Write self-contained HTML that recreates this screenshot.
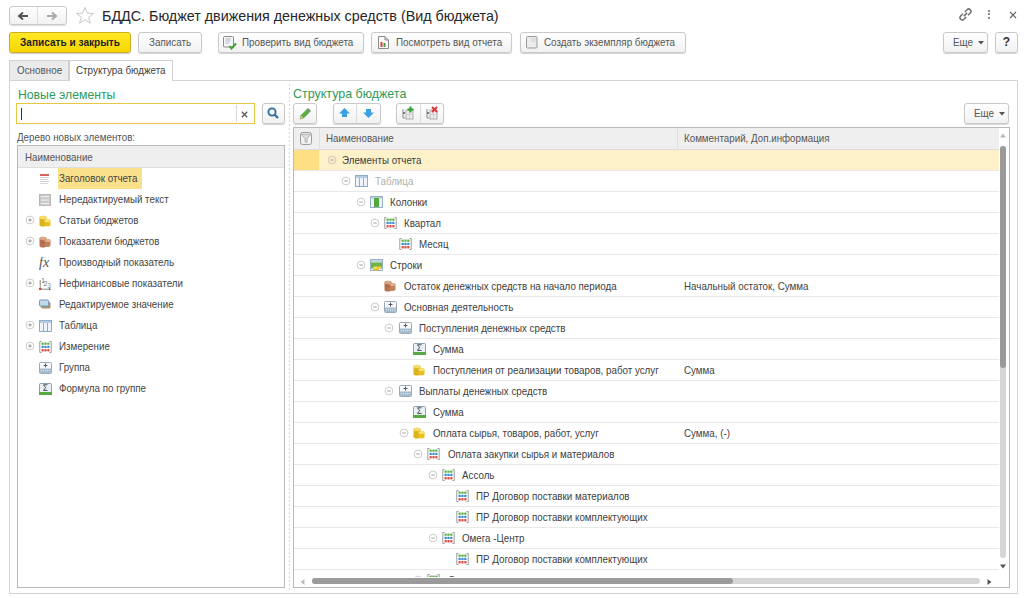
<!DOCTYPE html>
<html><head><meta charset="utf-8"><style>
*{box-sizing:border-box;margin:0;padding:0}
html,body{width:1024px;height:598px;overflow:hidden;background:#fff}
body{position:relative;font-family:"Liberation Sans",sans-serif;color:#404040}
.a{position:absolute}
.t{position:absolute;white-space:nowrap;font-size:11px;line-height:20px;color:#444;transform:scaleX(.889);transform-origin:0 0}
.btn{position:absolute;border:1px solid #c9c9c9;border-radius:3px;background:linear-gradient(#ffffff,#f1f1f1);box-shadow:0 1px 1px rgba(0,0,0,.18)}
.bt{position:absolute;white-space:nowrap;font-size:11px;line-height:20px;color:#555;transform:scaleX(.895);transform-origin:0 0}
.line{position:absolute;background:#e8e8e8;height:1px}
</style></head><body>

<div class="btn" style="left:9px;top:6px;width:58px;height:19px;box-shadow:0 1px 1px rgba(0,0,0,.15)"></div>
<div class="a" style="left:37px;top:7px;width:1px;height:17px;background:#dcdcdc"></div>
<svg class="a" style="left:17px;top:10.5px" width="12" height="10" viewBox="0 0 12 10"><path d="M11 5H3M6 1.5L2 5L6 8.5" stroke="#555" stroke-width="2" fill="none"/></svg>
<svg class="a" style="left:46px;top:10.5px" width="12" height="10" viewBox="0 0 12 10"><path d="M1 5H9M6 1.5L10 5L6 8.5" stroke="#a8a8a8" stroke-width="2" fill="none"/></svg>
<svg class="a" style="left:75px;top:6px" width="20" height="19" viewBox="0 0 20 19"><path d="M10 1.5L12.4 7.2L18.5 7.4L13.7 11.2L15.4 17.2L10 13.8L4.6 17.2L6.3 11.2L1.5 7.4L7.6 7.2Z" fill="none" stroke="#c8c8c8" stroke-width="1"/></svg>
<div class="a" style="left:102px;top:5.5px;font-size:14.3px;line-height:20px;color:#262626;white-space:nowrap">БДДС. Бюджет движения денежных средств (Вид бюджета)</div>
<svg class="a" style="left:958px;top:7px" width="15" height="15" viewBox="0 0 15 15"><g fill="none" stroke="#707070" stroke-width="1.45" transform="rotate(-45 7.5 7.5)"><path d="M6.2 5.2H3A2.3 2.3 0 0 0 3 9.8H6.2"/><path d="M8.8 5.2H12A2.3 2.3 0 0 1 12 9.8H8.8"/><path d="M5.2 7.5H9.8"/></g></svg>
<div class="a" style="left:987.8px;top:9.8px;width:2.3px;height:2.3px;border-radius:2px;background:#666"></div><div class="a" style="left:987.8px;top:12.9px;width:2.3px;height:2.3px;border-radius:2px;background:#666"></div><div class="a" style="left:987.8px;top:16.5px;width:2.3px;height:2.3px;border-radius:2px;background:#666"></div>
<svg class="a" style="left:1009px;top:11px" width="8" height="8" viewBox="0 0 8 8"><path d="M1 1L7 7M7 1L1 7" stroke="#666" stroke-width="1.1"/></svg>
<div class="a" style="left:9px;top:32px;width:122px;height:21px;border:1px solid #ccae20;border-radius:3px;background:linear-gradient(#ffe826,#f6d600);box-shadow:0 1px 1px rgba(0,0,0,.2)"></div>
<div class="a" style="left:20px;top:32px;font-size:11px;font-weight:bold;line-height:21px;color:#222;white-space:nowrap;transform:scaleX(.917);transform-origin:0 0">Записать и закрыть</div>
<div class="btn" style="left:138px;top:32px;width:64px;height:21px"></div>
<div class="bt" style="left:149px;top:32px;line-height:21px">Записать</div>
<div class="btn" style="left:218px;top:32px;width:146px;height:21px"></div>
<div class="bt" style="left:242px;top:32px;line-height:21px">Проверить вид бюджета</div>
<svg class="a" style="left:223px;top:36px" width="14" height="14" viewBox="0 0 14 14"><rect x="0.5" y="0.5" width="10" height="10.5" rx="1" fill="#f6f6f6" stroke="#8a8a8a"/><path d="M2.5 3H8M2.5 5H7.5M2.5 7H6" stroke="#a8b8c8"/><path d="M6.5 10L8.5 12.5L13 7.5" stroke="#40a030" stroke-width="2" fill="none"/></svg>
<div class="btn" style="left:371px;top:32px;width:141px;height:21px"></div>
<div class="bt" style="left:396px;top:32px;line-height:21px">Посмотреть вид отчета</div>
<svg class="a" style="left:378px;top:36px" width="11" height="13" viewBox="0 0 11 13"><path d="M0.5 0.5H7L10.5 4V12.5H0.5Z" fill="#fafafa" stroke="#8a8a8a"/><path d="M7 0.5V4H10.5" fill="#ccc" stroke="#8a8a8a"/><rect x="2.5" y="6" width="2" height="5" fill="#d84040"/><rect x="5.5" y="7" width="2" height="4" fill="#40a040"/></svg>
<div class="btn" style="left:520px;top:32px;width:166px;height:21px"></div>
<div class="bt" style="left:544px;top:32px;line-height:21px">Создать экземпляр бюджета</div>
<svg class="a" style="left:526px;top:36px" width="12" height="13" viewBox="0 0 12 13"><rect x="0.5" y="0.5" width="10.5" height="11.5" rx="1" fill="#ececec" stroke="#9a9a9a"/><rect x="5" y="2" width="4.5" height="4" fill="#dcdcdc"/></svg>
<div class="btn" style="left:943px;top:32px;width:45px;height:21px"></div>
<div class="bt" style="left:953px;top:32px;line-height:21px">Еще</div>
<svg class="a" style="left:978px;top:41px" width="6" height="4" viewBox="0 0 6 4"><path d="M0 0H6L3 3.5Z" fill="#555"/></svg>
<div class="btn" style="left:995px;top:32px;width:23px;height:21px"></div>
<div class="a" style="left:995px;top:32px;width:23px;line-height:21px;text-align:center;font-size:12px;font-weight:bold;color:#333">?</div>
<div class="a" style="left:9px;top:60px;width:60px;height:21px;background:#ebebeb;border:1px solid #d0d0d0;border-bottom:none"></div>
<div class="bt" style="left:17px;top:60px;line-height:21px">Основное</div>
<div class="a" style="left:9px;top:80px;width:1009px;height:514px;border:1px solid #d4d4d4;background:#fff"></div>
<div class="a" style="left:69px;top:60px;width:104px;height:21px;background:#fff;border:1px solid #d0d0d0;border-bottom:none"></div>
<div class="bt" style="left:76px;top:60px;line-height:21px;color:#404040">Структура бюджета</div>
<div class="a" style="left:18px;top:84.5px;font-size:13px;line-height:20px;color:#2f9a5a;white-space:nowrap;transform:scaleX(.94);transform-origin:0 0">Новые элементы</div>
<div class="a" style="left:16px;top:103px;width:239px;height:21px;border:1px solid #e8c840;background:#fff"></div>
<div class="a" style="left:21px;top:108px;width:1px;height:12px;background:#333"></div>
<div class="a" style="left:236px;top:105px;width:1px;height:17px;background:#d8d8d8"></div>
<svg class="a" style="left:241px;top:110.5px" width="7" height="7" viewBox="0 0 7 7"><path d="M0.8 0.8L6.2 6.2M6.2 0.8L0.8 6.2" stroke="#555" stroke-width="1.25"/></svg>
<div class="btn" style="left:262px;top:103px;width:23px;height:21px"></div>
<svg class="a" style="left:267px;top:107px" width="13" height="13" viewBox="0 0 13 13"><circle cx="5" cy="5" r="3.6" fill="none" stroke="#2a6aa0" stroke-width="1.8"/><path d="M7.5 7.5L11 11" stroke="#2a6aa0" stroke-width="2.2"/></svg>
<div class="t" style="left:17px;top:127px;color:#555">Дерево новых элементов:</div>
<div class="a" style="left:17px;top:145px;width:268px;height:443px;border:1px solid #b8b8b8;background:#fff"></div>
<div class="a" style="left:18px;top:146px;width:266px;height:22px;background:#efefef;border-bottom:1px solid #dedede"></div>
<div class="t" style="left:25px;top:146px;line-height:22px;color:#555">Наименование</div>
<div class="a" style="left:58px;top:168px;width:84px;height:21px;background:#fbe08c"></div>
<div class="a" style="left:39px;top:173px;width:13px;height:12px;line-height:0"><svg width="12" height="12" viewBox="0 0 12 12"><rect x="1" y="1" width="9" height="2" fill="#d8605a"/><rect x="1" y="4" width="9" height="1" fill="#cfd0d8"/><rect x="1" y="6" width="8" height="1" fill="#d4d4dc"/><rect x="1" y="8" width="9" height="1" fill="#cfd0d8"/><rect x="1" y="10" width="8" height="1" fill="#d8d8de"/></svg></div>
<div class="t" style="left:59px;top:168px;line-height:21px">Заголовок отчета</div>
<div class="a" style="left:39px;top:194px;width:13px;height:12px;line-height:0"><svg width="12" height="12" viewBox="0 0 12 12"><rect x="0" y="0" width="12" height="12" fill="#c9c9c9"/><rect x="0.5" y="0.5" width="11" height="11" fill="none" stroke="#b8b8b8"/><rect x="2" y="2" width="8" height="1.2" fill="#ededed"/><rect x="2" y="5.5" width="8" height="1.2" fill="#ededed"/><rect x="2" y="9" width="8" height="1.2" fill="#ededed"/></svg></div>
<div class="t" style="left:59px;top:189px;line-height:21px">Нередактируемый текст</div>
<svg class="a" style="left:25px;top:215px" width="10" height="10" viewBox="0 0 10 10"><circle cx="5" cy="5" r="3.9" fill="#fff" stroke="#c4c4c4" stroke-width="0.9"/><path d="M3.3 5H6.7M5 3.3V6.7" stroke="#8a8a8a" stroke-width="0.9"/></svg>
<div class="a" style="left:39px;top:215px;width:13px;height:12px;line-height:0"><svg width="12" height="12" viewBox="0 0 12 12"><path d="M0.5 2.5A3.5 1.8 0 0 1 7.5 2.5V9.8A3.5 1.8 0 0 1 0.5 9.8Z" fill="#dcb21c"/><ellipse cx="4" cy="2.5" rx="3.5" ry="1.8" fill="#f4dc66"/><path d="M5.5 5.5A3 1.6 0 0 1 11.5 5.5V9.8A3 1.6 0 0 1 5.5 9.8Z" fill="#e8c020"/><ellipse cx="8.5" cy="5.5" rx="3" ry="1.6" fill="#f8e27a"/></svg></div>
<div class="t" style="left:59px;top:210px;line-height:21px">Статьи бюджетов</div>
<svg class="a" style="left:25px;top:236px" width="10" height="10" viewBox="0 0 10 10"><circle cx="5" cy="5" r="3.9" fill="#fff" stroke="#c4c4c4" stroke-width="0.9"/><path d="M3.3 5H6.7M5 3.3V6.7" stroke="#8a8a8a" stroke-width="0.9"/></svg>
<div class="a" style="left:39px;top:236px;width:13px;height:12px;line-height:0"><svg width="12" height="12" viewBox="0 0 12 12"><path d="M0.5 2.5A3.5 1.8 0 0 1 7.5 2.5V9.8A3.5 1.8 0 0 1 0.5 9.8Z" fill="#b8724c"/><ellipse cx="4" cy="2.5" rx="3.5" ry="1.8" fill="#dca684"/><path d="M5.5 4.5A3 1.6 0 0 1 11.5 4.5V9.3A3 1.6 0 0 1 5.5 9.3Z" fill="#c08060"/><ellipse cx="8.5" cy="4.5" rx="3" ry="1.6" fill="#e2b090"/><path d="M1 5H7M1 7H7" stroke="#9a5a3a" stroke-width="0.5" opacity=".6"/></svg></div>
<div class="t" style="left:59px;top:231px;line-height:21px">Показатели бюджетов</div>
<div class="a" style="left:39px;top:257px;width:13px;height:12px;line-height:0"><svg width="14" height="13" viewBox="0 0 14 13"><text x="0" y="10" font-family="Liberation Serif" font-style="italic" font-size="14" fill="#555">fx</text></svg></div>
<div class="t" style="left:59px;top:252px;line-height:21px">Производный показатель</div>
<svg class="a" style="left:25px;top:278px" width="10" height="10" viewBox="0 0 10 10"><circle cx="5" cy="5" r="3.9" fill="#fff" stroke="#c4c4c4" stroke-width="0.9"/><path d="M3.3 5H6.7M5 3.3V6.7" stroke="#8a8a8a" stroke-width="0.9"/></svg>
<div class="a" style="left:39px;top:278px;width:13px;height:12px;line-height:0"><svg width="13" height="12" viewBox="0 0 13 12"><path d="M1.2 2V11.2H10.5" stroke="#8a8a8a" fill="none" stroke-width="1"/><rect x="0" y="10" width="2.6" height="2" fill="#d04a40"/><path d="M10 9.8L12 11.2L10 12.6Z" fill="#555"/><text x="2.2" y="5.2" font-family="Liberation Sans" font-size="6.5" fill="#5a6a7a">1</text><text x="4.6" y="8.4" font-family="Liberation Sans" font-size="7" fill="#6a7a8a">2</text><text x="8.3" y="10" font-family="Liberation Sans" font-size="6.5" fill="#7a8a9a">3</text></svg></div>
<div class="t" style="left:59px;top:273px;line-height:21px">Нефинансовые показатели</div>
<div class="a" style="left:39px;top:299px;width:13px;height:12px;line-height:0"><svg width="12" height="12" viewBox="0 0 12 12"><rect x="2.5" y="3.5" width="9" height="6" rx="1" fill="#d87a68"/><rect x="1.5" y="2.5" width="9" height="6" rx="1" fill="#78b060"/><rect x="0.5" y="1" width="9" height="6" rx="1" fill="#c0d8ec" stroke="#7898b8"/></svg></div>
<div class="t" style="left:59px;top:294px;line-height:21px">Редактируемое значение</div>
<svg class="a" style="left:25px;top:320px" width="10" height="10" viewBox="0 0 10 10"><circle cx="5" cy="5" r="3.9" fill="#fff" stroke="#c4c4c4" stroke-width="0.9"/><path d="M3.3 5H6.7M5 3.3V6.7" stroke="#8a8a8a" stroke-width="0.9"/></svg>
<div class="a" style="left:39px;top:320px;width:13px;height:12px;line-height:0"><svg width="13" height="12" viewBox="0 0 13 12"><rect x="0.5" y="0.5" width="12" height="11" fill="#eef4fa" stroke="#8eacc8"/><rect x="1" y="1" width="11" height="2" fill="#b4cce0"/><path d="M4.5 3V11.5M8.5 3V11.5" stroke="#8eacc8"/></svg></div>
<div class="t" style="left:59px;top:315px;line-height:21px">Таблица</div>
<svg class="a" style="left:25px;top:341px" width="10" height="10" viewBox="0 0 10 10"><circle cx="5" cy="5" r="3.9" fill="#fff" stroke="#c4c4c4" stroke-width="0.9"/><path d="M3.3 5H6.7M5 3.3V6.7" stroke="#8a8a8a" stroke-width="0.9"/></svg>
<div class="a" style="left:39px;top:341px;width:13px;height:12px;line-height:0"><svg width="13" height="12" viewBox="0 0 13 12"><path d="M2.5 0.5H0.8V11.5H2.5M10.5 0.5H12.2V11.5H10.5" stroke="#9a9a9a" stroke-width="1" fill="none"/><g fill="#5cb048"><rect x="2.5" y="1.5" width="2.3" height="2.3" rx=".6"/><rect x="5.35" y="1.5" width="2.3" height="2.3" rx=".6"/><rect x="8.2" y="1.5" width="2.3" height="2.3" rx=".6"/></g><g fill="#3a8ed0"><rect x="2.5" y="4.8" width="2.3" height="2.3" rx=".6"/><rect x="5.35" y="4.8" width="2.3" height="2.3" rx=".6"/><rect x="8.2" y="4.8" width="2.3" height="2.3" rx=".6"/></g><g fill="#d8504a"><rect x="2.5" y="8.1" width="2.3" height="2.3" rx=".6"/><rect x="5.35" y="8.1" width="2.3" height="2.3" rx=".6"/><rect x="8.2" y="8.1" width="2.3" height="2.3" rx=".6"/></g></svg></div>
<div class="t" style="left:59px;top:336px;line-height:21px">Измерение</div>
<div class="a" style="left:39px;top:362px;width:13px;height:12px;line-height:0"><svg width="13" height="12" viewBox="0 0 13 12"><rect x="0.5" y="0.5" width="12" height="11" rx="1" fill="#f6f8fa" stroke="#98aaba"/><rect x="1" y="6.5" width="11" height="4.5" fill="#a6bccd"/><path d="M2 8.8H11" stroke="#dfe8ef" stroke-dasharray="1 1"/><path d="M6.5 1.5V5.5M4.5 3.5H8.5" stroke="#505a64" stroke-width="1"/></svg></div>
<div class="t" style="left:59px;top:357px;line-height:21px">Группа</div>
<div class="a" style="left:39px;top:383px;width:13px;height:12px;line-height:0"><svg width="13" height="12" viewBox="0 0 13 12"><rect x="0.5" y="0.5" width="12" height="11" rx="1" fill="#e8f0f5" stroke="#8aa2b2"/><rect x="0" y="9" width="13" height="3" fill="#58aa40"/><path d="M4.5 1.8H8.5M4.5 1.8L6.6 4.6L4.5 7.4H8.5" stroke="#3a3a3a" fill="none" stroke-width="0.9"/></svg></div>
<div class="t" style="left:59px;top:378px;line-height:21px">Формула по группе</div>
<div class="a" style="left:289px;top:84px;width:1px;height:506px;background:repeating-linear-gradient(#d8d8d8 0 2px,transparent 2px 4px)"></div>
<div class="a" style="left:293px;top:84px;font-size:13px;line-height:20px;color:#2f9a5a;white-space:nowrap;transform:scaleX(.958);transform-origin:0 0">Структура бюджета</div>
<div class="btn" style="left:293px;top:103px;width:24px;height:21px"></div>
<svg class="a" style="left:298px;top:107px" width="14" height="14" viewBox="0 0 14 14"><path d="M2 12L3 8.5L10 1.5L12.5 4L5.5 11Z" fill="#58b040" stroke="#3a7a2a" stroke-width="0.6"/><path d="M2 12L3 8.5L5.5 11Z" fill="#e8c890"/><path d="M10 1.5L12.5 4L11.5 5L9 2.5Z" fill="#888"/></svg>
<div class="btn" style="left:333px;top:103px;width:48px;height:21px"></div>
<div class="a" style="left:356px;top:104px;width:1px;height:19px;background:#dcdcdc"></div>
<svg class="a" style="left:338px;top:107px" width="13" height="12" viewBox="0 0 13 12"><path d="M6.5 1L12 6.5H9V10H4V6.5H1Z" fill="#3aa0e0"/></svg>
<svg class="a" style="left:362px;top:107px" width="13" height="12" viewBox="0 0 13 12"><path d="M6.5 11L12 5.5H9V2H4V5.5H1Z" fill="#3aa0e0"/></svg>
<div class="btn" style="left:396px;top:103px;width:48px;height:21px"></div>
<div class="a" style="left:420px;top:104px;width:1px;height:19px;background:#dcdcdc"></div>
<svg class="a" style="left:401px;top:106px" width="14" height="14" viewBox="0 0 14 14"><rect x="5" y="4" width="7" height="9" fill="#eee" stroke="#aaa"/><path d="M8.5 4V13M5 8.5H12" stroke="#ccc"/><path d="M2 3V12M2 12H4" stroke="#888"/><circle cx="3" cy="7" r="1" fill="#555"/><path d="M9.5 0.5V6.5M6.5 3.5H12.5" stroke="#30a030" stroke-width="2"/></svg>
<svg class="a" style="left:425px;top:106px" width="14" height="14" viewBox="0 0 14 14"><rect x="5" y="4" width="7" height="9" fill="#eee" stroke="#aaa"/><path d="M8.5 4V13M5 8.5H12" stroke="#ccc"/><path d="M2 3V12M2 12H4" stroke="#888"/><circle cx="3" cy="7" r="1" fill="#555"/><path d="M7 1L12 6M12 1L7 6" stroke="#e03030" stroke-width="1.8"/></svg>
<div class="a" style="left:964px;top:103px;width:45px;height:21px;border:1px solid #c9c9c9;border-radius:3px;background:linear-gradient(#fff,#f1f1f1);box-shadow:0 1px 1px rgba(0,0,0,.18)"></div>
<div class="bt" style="left:974px;top:103px;line-height:21px">Еще</div>
<svg class="a" style="left:999px;top:112px" width="6" height="4" viewBox="0 0 6 4"><path d="M0 0H6L3 3.5Z" fill="#555"/></svg>
<div class="a" style="left:293px;top:127px;width:717px;height:461px;border:1px solid #b8b8b8;background:#fff"></div>
<div class="a" style="left:294px;top:128px;width:705px;height:22px;background:#efefef;border-bottom:1px solid #dcdcdc"></div>
<div class="a" style="left:319px;top:128px;width:1px;height:21px;background:#dedede"></div>
<div class="a" style="left:677px;top:128px;width:1px;height:21px;background:#dedede"></div>
<svg class="a" style="left:300px;top:132px" width="12" height="13" viewBox="0 0 12 13"><rect x="0.5" y="0.5" width="11" height="12" rx="2" fill="#f2f2f2" stroke="#9c9c9c"/><path d="M1.2 2.2H10.8L7 6.5V10.8L5 9.8V6.5Z" fill="#dcdcdc" stroke="#a4a4a4" stroke-width="0.8"/></svg>
<div class="t" style="left:326px;top:128px;line-height:21px;color:#555">Наименование</div>
<div class="t" style="left:684px;top:128px;line-height:21px;color:#555">Комментарий, Доп.информация</div>
<div class="a" style="left:294px;top:150px;width:705px;height:437px;overflow:hidden">
<div class="a" style="left:0px;top:0px;width:25px;height:20px;background:#fde084"></div>
<div class="a" style="left:25px;top:0px;width:680px;height:20px;background:#fcf1c8"></div>
<div class="line" style="left:0;top:20px;width:705px"></div>
<svg class="a" style="left:33px;top:5px" width="10" height="10" viewBox="0 0 10 10"><circle cx="5" cy="5" r="3.9" fill="none" stroke="#c4c4c4" stroke-width="0.9"/><path d="M3.2 5H6.8" stroke="#9a9a9a" stroke-width="0.9"/></svg>
<div class="t" style="left:47.8px;top:0px;color:#404040">Элементы отчета</div>
<div class="line" style="left:0;top:41px;width:705px"></div>
<svg class="a" style="left:47px;top:26px" width="10" height="10" viewBox="0 0 10 10"><circle cx="5" cy="5" r="3.9" fill="none" stroke="#c4c4c4" stroke-width="0.9"/><path d="M3.2 5H6.8" stroke="#9a9a9a" stroke-width="0.9"/></svg>
<div class="a" style="left:61px;top:25px;width:13px;height:12px;line-height:0"><svg width="13" height="12" viewBox="0 0 13 12"><rect x="0.5" y="0.5" width="12" height="11" fill="#eef4fa" stroke="#8eacc8"/><rect x="1" y="1" width="11" height="2" fill="#b4cce0"/><path d="M4.5 3V11.5M8.5 3V11.5" stroke="#8eacc8"/></svg></div>
<div class="t" style="left:81.3px;top:21px;color:#b0b0b0">Таблица</div>
<div class="line" style="left:0;top:62px;width:705px"></div>
<svg class="a" style="left:62px;top:47px" width="10" height="10" viewBox="0 0 10 10"><circle cx="5" cy="5" r="3.9" fill="none" stroke="#c4c4c4" stroke-width="0.9"/><path d="M3.2 5H6.8" stroke="#9a9a9a" stroke-width="0.9"/></svg>
<div class="a" style="left:76px;top:46px;width:13px;height:12px;line-height:0"><svg width="13" height="12" viewBox="0 0 13 12"><rect x="0.5" y="0.5" width="12" height="11" fill="#eef4f8" stroke="#98b0c4"/><rect x="1" y="1" width="11" height="1.5" fill="#b8c8d4"/><rect x="4" y="2" width="5" height="9" fill="#52aa3c"/></svg></div>
<div class="t" style="left:95.7px;top:42px;color:#404040">Колонки</div>
<div class="line" style="left:0;top:83px;width:705px"></div>
<svg class="a" style="left:76px;top:68px" width="10" height="10" viewBox="0 0 10 10"><circle cx="5" cy="5" r="3.9" fill="none" stroke="#c4c4c4" stroke-width="0.9"/><path d="M3.2 5H6.8" stroke="#9a9a9a" stroke-width="0.9"/></svg>
<div class="a" style="left:90px;top:67px;width:13px;height:12px;line-height:0"><svg width="13" height="12" viewBox="0 0 13 12"><path d="M2.5 0.5H0.8V11.5H2.5M10.5 0.5H12.2V11.5H10.5" stroke="#9a9a9a" stroke-width="1" fill="none"/><g fill="#5cb048"><rect x="2.5" y="1.5" width="2.3" height="2.3" rx=".6"/><rect x="5.35" y="1.5" width="2.3" height="2.3" rx=".6"/><rect x="8.2" y="1.5" width="2.3" height="2.3" rx=".6"/></g><g fill="#3a8ed0"><rect x="2.5" y="4.8" width="2.3" height="2.3" rx=".6"/><rect x="5.35" y="4.8" width="2.3" height="2.3" rx=".6"/><rect x="8.2" y="4.8" width="2.3" height="2.3" rx=".6"/></g><g fill="#d8504a"><rect x="2.5" y="8.1" width="2.3" height="2.3" rx=".6"/><rect x="5.35" y="8.1" width="2.3" height="2.3" rx=".6"/><rect x="8.2" y="8.1" width="2.3" height="2.3" rx=".6"/></g></svg></div>
<div class="t" style="left:110.2px;top:63px;color:#404040">Квартал</div>
<div class="line" style="left:0;top:104px;width:705px"></div>
<div class="a" style="left:105px;top:88px;width:13px;height:12px;line-height:0"><svg width="13" height="12" viewBox="0 0 13 12"><path d="M2.5 0.5H0.8V11.5H2.5M10.5 0.5H12.2V11.5H10.5" stroke="#9a9a9a" stroke-width="1" fill="none"/><g fill="#5cb048"><rect x="2.5" y="1.5" width="2.3" height="2.3" rx=".6"/><rect x="5.35" y="1.5" width="2.3" height="2.3" rx=".6"/><rect x="8.2" y="1.5" width="2.3" height="2.3" rx=".6"/></g><g fill="#3a8ed0"><rect x="2.5" y="4.8" width="2.3" height="2.3" rx=".6"/><rect x="5.35" y="4.8" width="2.3" height="2.3" rx=".6"/><rect x="8.2" y="4.8" width="2.3" height="2.3" rx=".6"/></g><g fill="#d8504a"><rect x="2.5" y="8.1" width="2.3" height="2.3" rx=".6"/><rect x="5.35" y="8.1" width="2.3" height="2.3" rx=".6"/><rect x="8.2" y="8.1" width="2.3" height="2.3" rx=".6"/></g></svg></div>
<div class="t" style="left:124.6px;top:84px;color:#404040">Месяц</div>
<div class="line" style="left:0;top:125px;width:705px"></div>
<svg class="a" style="left:62px;top:110px" width="10" height="10" viewBox="0 0 10 10"><circle cx="5" cy="5" r="3.9" fill="none" stroke="#c4c4c4" stroke-width="0.9"/><path d="M3.2 5H6.8" stroke="#9a9a9a" stroke-width="0.9"/></svg>
<div class="a" style="left:76px;top:109px;width:13px;height:12px;line-height:0"><svg width="13" height="12" viewBox="0 0 13 12"><rect x="0.5" y="0.5" width="12" height="11" fill="#eef4f8" stroke="#98b0c4"/><rect x="1" y="1" width="11" height="2.5" fill="#c4d4e0"/><rect x="1" y="3.5" width="11" height="6" fill="#6cb448"/><ellipse cx="6" cy="9.5" rx="3" ry="2" fill="#e2b820"/><ellipse cx="5.5" cy="8.8" rx="2.4" ry="1.4" fill="#f6dc5a"/><ellipse cx="9.5" cy="8.5" rx="2" ry="1.3" fill="#f0d040"/></svg></div>
<div class="t" style="left:95.7px;top:105px;color:#404040">Строки</div>
<div class="line" style="left:0;top:146px;width:705px"></div>
<div class="a" style="left:90px;top:130px;width:13px;height:12px;line-height:0"><svg width="12" height="12" viewBox="0 0 12 12"><path d="M0.5 2.5A3.5 1.8 0 0 1 7.5 2.5V9.8A3.5 1.8 0 0 1 0.5 9.8Z" fill="#b8724c"/><ellipse cx="4" cy="2.5" rx="3.5" ry="1.8" fill="#dca684"/><path d="M5.5 4.5A3 1.6 0 0 1 11.5 4.5V9.3A3 1.6 0 0 1 5.5 9.3Z" fill="#c08060"/><ellipse cx="8.5" cy="4.5" rx="3" ry="1.6" fill="#e2b090"/><path d="M1 5H7M1 7H7" stroke="#9a5a3a" stroke-width="0.5" opacity=".6"/></svg></div>
<div class="t" style="left:110.2px;top:126px;color:#404040">Остаток денежных средств на начало периода</div>
<div class="t" style="left:390px;top:126px">Начальный остаток, Сумма</div>
<div class="line" style="left:0;top:167px;width:705px"></div>
<svg class="a" style="left:76px;top:152px" width="10" height="10" viewBox="0 0 10 10"><circle cx="5" cy="5" r="3.9" fill="none" stroke="#c4c4c4" stroke-width="0.9"/><path d="M3.2 5H6.8" stroke="#9a9a9a" stroke-width="0.9"/></svg>
<div class="a" style="left:90px;top:151px;width:13px;height:12px;line-height:0"><svg width="13" height="12" viewBox="0 0 13 12"><rect x="0.5" y="0.5" width="12" height="11" rx="1" fill="#f6f8fa" stroke="#98aaba"/><rect x="1" y="6.5" width="11" height="4.5" fill="#a6bccd"/><path d="M2 8.8H11" stroke="#dfe8ef" stroke-dasharray="1 1"/><path d="M6.5 1.5V5.5M4.5 3.5H8.5" stroke="#505a64" stroke-width="1"/></svg></div>
<div class="t" style="left:110.2px;top:147px;color:#404040">Основная деятельность</div>
<div class="line" style="left:0;top:188px;width:705px"></div>
<svg class="a" style="left:90px;top:173px" width="10" height="10" viewBox="0 0 10 10"><circle cx="5" cy="5" r="3.9" fill="none" stroke="#c4c4c4" stroke-width="0.9"/><path d="M3.2 5H6.8" stroke="#9a9a9a" stroke-width="0.9"/></svg>
<div class="a" style="left:105px;top:172px;width:13px;height:12px;line-height:0"><svg width="13" height="12" viewBox="0 0 13 12"><rect x="0.5" y="0.5" width="12" height="11" rx="1" fill="#f6f8fa" stroke="#98aaba"/><rect x="1" y="6.5" width="11" height="4.5" fill="#a6bccd"/><path d="M2 8.8H11" stroke="#dfe8ef" stroke-dasharray="1 1"/><path d="M6.5 1.5V5.5M4.5 3.5H8.5" stroke="#505a64" stroke-width="1"/></svg></div>
<div class="t" style="left:124.6px;top:168px;color:#404040">Поступления денежных средств</div>
<div class="line" style="left:0;top:209px;width:705px"></div>
<div class="a" style="left:119px;top:193px;width:13px;height:12px;line-height:0"><svg width="13" height="12" viewBox="0 0 13 12"><rect x="0.5" y="0.5" width="12" height="11" rx="1" fill="#e8f0f5" stroke="#8aa2b2"/><rect x="0" y="9" width="13" height="3" fill="#58aa40"/><path d="M4.5 1.8H8.5M4.5 1.8L6.6 4.6L4.5 7.4H8.5" stroke="#3a3a3a" fill="none" stroke-width="0.9"/></svg></div>
<div class="t" style="left:139.0px;top:189px;color:#404040">Сумма</div>
<div class="line" style="left:0;top:230px;width:705px"></div>
<div class="a" style="left:119px;top:214px;width:13px;height:12px;line-height:0"><svg width="12" height="12" viewBox="0 0 12 12"><path d="M0.5 2.5A3.5 1.8 0 0 1 7.5 2.5V9.8A3.5 1.8 0 0 1 0.5 9.8Z" fill="#dcb21c"/><ellipse cx="4" cy="2.5" rx="3.5" ry="1.8" fill="#f4dc66"/><path d="M5.5 5.5A3 1.6 0 0 1 11.5 5.5V9.8A3 1.6 0 0 1 5.5 9.8Z" fill="#e8c020"/><ellipse cx="8.5" cy="5.5" rx="3" ry="1.6" fill="#f8e27a"/></svg></div>
<div class="t" style="left:139.0px;top:210px;color:#404040">Поступления от реализации товаров, работ услуг</div>
<div class="t" style="left:390px;top:210px">Сумма</div>
<div class="line" style="left:0;top:251px;width:705px"></div>
<svg class="a" style="left:90px;top:236px" width="10" height="10" viewBox="0 0 10 10"><circle cx="5" cy="5" r="3.9" fill="none" stroke="#c4c4c4" stroke-width="0.9"/><path d="M3.2 5H6.8" stroke="#9a9a9a" stroke-width="0.9"/></svg>
<div class="a" style="left:105px;top:235px;width:13px;height:12px;line-height:0"><svg width="13" height="12" viewBox="0 0 13 12"><rect x="0.5" y="0.5" width="12" height="11" rx="1" fill="#f6f8fa" stroke="#98aaba"/><rect x="1" y="6.5" width="11" height="4.5" fill="#a6bccd"/><path d="M2 8.8H11" stroke="#dfe8ef" stroke-dasharray="1 1"/><path d="M6.5 1.5V5.5M4.5 3.5H8.5" stroke="#505a64" stroke-width="1"/></svg></div>
<div class="t" style="left:124.6px;top:231px;color:#404040">Выплаты денежных средств</div>
<div class="line" style="left:0;top:272px;width:705px"></div>
<div class="a" style="left:119px;top:256px;width:13px;height:12px;line-height:0"><svg width="13" height="12" viewBox="0 0 13 12"><rect x="0.5" y="0.5" width="12" height="11" rx="1" fill="#e8f0f5" stroke="#8aa2b2"/><rect x="0" y="9" width="13" height="3" fill="#58aa40"/><path d="M4.5 1.8H8.5M4.5 1.8L6.6 4.6L4.5 7.4H8.5" stroke="#3a3a3a" fill="none" stroke-width="0.9"/></svg></div>
<div class="t" style="left:139.0px;top:252px;color:#404040">Сумма</div>
<div class="line" style="left:0;top:293px;width:705px"></div>
<svg class="a" style="left:105px;top:278px" width="10" height="10" viewBox="0 0 10 10"><circle cx="5" cy="5" r="3.9" fill="none" stroke="#c4c4c4" stroke-width="0.9"/><path d="M3.2 5H6.8" stroke="#9a9a9a" stroke-width="0.9"/></svg>
<div class="a" style="left:119px;top:277px;width:13px;height:12px;line-height:0"><svg width="12" height="12" viewBox="0 0 12 12"><path d="M0.5 2.5A3.5 1.8 0 0 1 7.5 2.5V9.8A3.5 1.8 0 0 1 0.5 9.8Z" fill="#dcb21c"/><ellipse cx="4" cy="2.5" rx="3.5" ry="1.8" fill="#f4dc66"/><path d="M5.5 5.5A3 1.6 0 0 1 11.5 5.5V9.8A3 1.6 0 0 1 5.5 9.8Z" fill="#e8c020"/><ellipse cx="8.5" cy="5.5" rx="3" ry="1.6" fill="#f8e27a"/></svg></div>
<div class="t" style="left:139.0px;top:273px;color:#404040">Оплата сырья, товаров, работ, услуг</div>
<div class="t" style="left:390px;top:273px">Сумма, (-)</div>
<div class="line" style="left:0;top:314px;width:705px"></div>
<svg class="a" style="left:119px;top:299px" width="10" height="10" viewBox="0 0 10 10"><circle cx="5" cy="5" r="3.9" fill="none" stroke="#c4c4c4" stroke-width="0.9"/><path d="M3.2 5H6.8" stroke="#9a9a9a" stroke-width="0.9"/></svg>
<div class="a" style="left:133px;top:298px;width:13px;height:12px;line-height:0"><svg width="13" height="12" viewBox="0 0 13 12"><path d="M2.5 0.5H0.8V11.5H2.5M10.5 0.5H12.2V11.5H10.5" stroke="#9a9a9a" stroke-width="1" fill="none"/><g fill="#5cb048"><rect x="2.5" y="1.5" width="2.3" height="2.3" rx=".6"/><rect x="5.35" y="1.5" width="2.3" height="2.3" rx=".6"/><rect x="8.2" y="1.5" width="2.3" height="2.3" rx=".6"/></g><g fill="#3a8ed0"><rect x="2.5" y="4.8" width="2.3" height="2.3" rx=".6"/><rect x="5.35" y="4.8" width="2.3" height="2.3" rx=".6"/><rect x="8.2" y="4.8" width="2.3" height="2.3" rx=".6"/></g><g fill="#d8504a"><rect x="2.5" y="8.1" width="2.3" height="2.3" rx=".6"/><rect x="5.35" y="8.1" width="2.3" height="2.3" rx=".6"/><rect x="8.2" y="8.1" width="2.3" height="2.3" rx=".6"/></g></svg></div>
<div class="t" style="left:153.5px;top:294px;color:#404040">Оплата закупки сырья и материалов</div>
<div class="line" style="left:0;top:335px;width:705px"></div>
<svg class="a" style="left:134px;top:320px" width="10" height="10" viewBox="0 0 10 10"><circle cx="5" cy="5" r="3.9" fill="none" stroke="#c4c4c4" stroke-width="0.9"/><path d="M3.2 5H6.8" stroke="#9a9a9a" stroke-width="0.9"/></svg>
<div class="a" style="left:148px;top:319px;width:13px;height:12px;line-height:0"><svg width="13" height="12" viewBox="0 0 13 12"><path d="M2.5 0.5H0.8V11.5H2.5M10.5 0.5H12.2V11.5H10.5" stroke="#9a9a9a" stroke-width="1" fill="none"/><g fill="#5cb048"><rect x="2.5" y="1.5" width="2.3" height="2.3" rx=".6"/><rect x="5.35" y="1.5" width="2.3" height="2.3" rx=".6"/><rect x="8.2" y="1.5" width="2.3" height="2.3" rx=".6"/></g><g fill="#3a8ed0"><rect x="2.5" y="4.8" width="2.3" height="2.3" rx=".6"/><rect x="5.35" y="4.8" width="2.3" height="2.3" rx=".6"/><rect x="8.2" y="4.8" width="2.3" height="2.3" rx=".6"/></g><g fill="#d8504a"><rect x="2.5" y="8.1" width="2.3" height="2.3" rx=".6"/><rect x="5.35" y="8.1" width="2.3" height="2.3" rx=".6"/><rect x="8.2" y="8.1" width="2.3" height="2.3" rx=".6"/></g></svg></div>
<div class="t" style="left:167.9px;top:315px;color:#404040">Ассоль</div>
<div class="line" style="left:0;top:356px;width:705px"></div>
<div class="a" style="left:162px;top:340px;width:13px;height:12px;line-height:0"><svg width="13" height="12" viewBox="0 0 13 12"><path d="M2.5 0.5H0.8V11.5H2.5M10.5 0.5H12.2V11.5H10.5" stroke="#9a9a9a" stroke-width="1" fill="none"/><g fill="#5cb048"><rect x="2.5" y="1.5" width="2.3" height="2.3" rx=".6"/><rect x="5.35" y="1.5" width="2.3" height="2.3" rx=".6"/><rect x="8.2" y="1.5" width="2.3" height="2.3" rx=".6"/></g><g fill="#3a8ed0"><rect x="2.5" y="4.8" width="2.3" height="2.3" rx=".6"/><rect x="5.35" y="4.8" width="2.3" height="2.3" rx=".6"/><rect x="8.2" y="4.8" width="2.3" height="2.3" rx=".6"/></g><g fill="#d8504a"><rect x="2.5" y="8.1" width="2.3" height="2.3" rx=".6"/><rect x="5.35" y="8.1" width="2.3" height="2.3" rx=".6"/><rect x="8.2" y="8.1" width="2.3" height="2.3" rx=".6"/></g></svg></div>
<div class="t" style="left:182.3px;top:336px;color:#404040">ПР Договор поставки материалов</div>
<div class="line" style="left:0;top:377px;width:705px"></div>
<div class="a" style="left:162px;top:361px;width:13px;height:12px;line-height:0"><svg width="13" height="12" viewBox="0 0 13 12"><path d="M2.5 0.5H0.8V11.5H2.5M10.5 0.5H12.2V11.5H10.5" stroke="#9a9a9a" stroke-width="1" fill="none"/><g fill="#5cb048"><rect x="2.5" y="1.5" width="2.3" height="2.3" rx=".6"/><rect x="5.35" y="1.5" width="2.3" height="2.3" rx=".6"/><rect x="8.2" y="1.5" width="2.3" height="2.3" rx=".6"/></g><g fill="#3a8ed0"><rect x="2.5" y="4.8" width="2.3" height="2.3" rx=".6"/><rect x="5.35" y="4.8" width="2.3" height="2.3" rx=".6"/><rect x="8.2" y="4.8" width="2.3" height="2.3" rx=".6"/></g><g fill="#d8504a"><rect x="2.5" y="8.1" width="2.3" height="2.3" rx=".6"/><rect x="5.35" y="8.1" width="2.3" height="2.3" rx=".6"/><rect x="8.2" y="8.1" width="2.3" height="2.3" rx=".6"/></g></svg></div>
<div class="t" style="left:182.3px;top:357px;color:#404040">ПР Договор поставки комплектующих</div>
<div class="line" style="left:0;top:398px;width:705px"></div>
<svg class="a" style="left:134px;top:383px" width="10" height="10" viewBox="0 0 10 10"><circle cx="5" cy="5" r="3.9" fill="none" stroke="#c4c4c4" stroke-width="0.9"/><path d="M3.2 5H6.8" stroke="#9a9a9a" stroke-width="0.9"/></svg>
<div class="a" style="left:148px;top:382px;width:13px;height:12px;line-height:0"><svg width="13" height="12" viewBox="0 0 13 12"><path d="M2.5 0.5H0.8V11.5H2.5M10.5 0.5H12.2V11.5H10.5" stroke="#9a9a9a" stroke-width="1" fill="none"/><g fill="#5cb048"><rect x="2.5" y="1.5" width="2.3" height="2.3" rx=".6"/><rect x="5.35" y="1.5" width="2.3" height="2.3" rx=".6"/><rect x="8.2" y="1.5" width="2.3" height="2.3" rx=".6"/></g><g fill="#3a8ed0"><rect x="2.5" y="4.8" width="2.3" height="2.3" rx=".6"/><rect x="5.35" y="4.8" width="2.3" height="2.3" rx=".6"/><rect x="8.2" y="4.8" width="2.3" height="2.3" rx=".6"/></g><g fill="#d8504a"><rect x="2.5" y="8.1" width="2.3" height="2.3" rx=".6"/><rect x="5.35" y="8.1" width="2.3" height="2.3" rx=".6"/><rect x="8.2" y="8.1" width="2.3" height="2.3" rx=".6"/></g></svg></div>
<div class="t" style="left:167.9px;top:378px;color:#404040">Омега -Центр</div>
<div class="line" style="left:0;top:419px;width:705px"></div>
<div class="a" style="left:162px;top:403px;width:13px;height:12px;line-height:0"><svg width="13" height="12" viewBox="0 0 13 12"><path d="M2.5 0.5H0.8V11.5H2.5M10.5 0.5H12.2V11.5H10.5" stroke="#9a9a9a" stroke-width="1" fill="none"/><g fill="#5cb048"><rect x="2.5" y="1.5" width="2.3" height="2.3" rx=".6"/><rect x="5.35" y="1.5" width="2.3" height="2.3" rx=".6"/><rect x="8.2" y="1.5" width="2.3" height="2.3" rx=".6"/></g><g fill="#3a8ed0"><rect x="2.5" y="4.8" width="2.3" height="2.3" rx=".6"/><rect x="5.35" y="4.8" width="2.3" height="2.3" rx=".6"/><rect x="8.2" y="4.8" width="2.3" height="2.3" rx=".6"/></g><g fill="#d8504a"><rect x="2.5" y="8.1" width="2.3" height="2.3" rx=".6"/><rect x="5.35" y="8.1" width="2.3" height="2.3" rx=".6"/><rect x="8.2" y="8.1" width="2.3" height="2.3" rx=".6"/></g></svg></div>
<div class="t" style="left:182.3px;top:399px;color:#404040">ПР Договор поставки комплектующих</div>
<div class="line" style="left:0;top:440px;width:705px"></div>
<svg class="a" style="left:119px;top:425px" width="10" height="10" viewBox="0 0 10 10"><circle cx="5" cy="5" r="3.9" fill="none" stroke="#c4c4c4" stroke-width="0.9"/><path d="M3.2 5H6.8" stroke="#9a9a9a" stroke-width="0.9"/></svg>
<div class="a" style="left:133px;top:424px;width:13px;height:12px;line-height:0"><svg width="13" height="12" viewBox="0 0 13 12"><path d="M2.5 0.5H0.8V11.5H2.5M10.5 0.5H12.2V11.5H10.5" stroke="#9a9a9a" stroke-width="1" fill="none"/><g fill="#5cb048"><rect x="2.5" y="1.5" width="2.3" height="2.3" rx=".6"/><rect x="5.35" y="1.5" width="2.3" height="2.3" rx=".6"/><rect x="8.2" y="1.5" width="2.3" height="2.3" rx=".6"/></g><g fill="#3a8ed0"><rect x="2.5" y="4.8" width="2.3" height="2.3" rx=".6"/><rect x="5.35" y="4.8" width="2.3" height="2.3" rx=".6"/><rect x="8.2" y="4.8" width="2.3" height="2.3" rx=".6"/></g><g fill="#d8504a"><rect x="2.5" y="8.1" width="2.3" height="2.3" rx=".6"/><rect x="5.35" y="8.1" width="2.3" height="2.3" rx=".6"/><rect x="8.2" y="8.1" width="2.3" height="2.3" rx=".6"/></g></svg></div>
<div class="t" style="left:153.5px;top:420px;color:#404040">Омега</div>
</div>
<div class="a" style="left:999px;top:150px;width:10px;height:437px;background:#fff"></div>
<svg class="a" style="left:1000px;top:133px" width="6" height="5" viewBox="0 0 6 5"><path d="M0 4.5H6L3 0.5Z" fill="#bbb"/></svg>
<div class="a" style="left:1000px;top:146px;width:6px;height:412px;border-radius:3px;background:#d6d6d6"></div>
<div class="a" style="left:1000px;top:146px;width:6px;height:222px;border-radius:3px;background:#9a9a9a"></div>
<svg class="a" style="left:1000px;top:564px" width="6" height="5" viewBox="0 0 6 5"><path d="M0 0.5H6L3 4.5Z" fill="#555"/></svg>
<div class="a" style="left:294px;top:577px;width:705px;height:10px;background:#fff"></div>
<svg class="a" style="left:300px;top:579px" width="5" height="6" viewBox="0 0 5 6"><path d="M4.5 0V6L0.5 3Z" fill="#bbb"/></svg>
<div class="a" style="left:312px;top:578px;width:668px;height:6px;border-radius:3px;background:#d6d6d6"></div>
<div class="a" style="left:312px;top:578px;width:421px;height:6px;border-radius:3px;background:#9a9a9a"></div>
<svg class="a" style="left:987px;top:579px" width="5" height="6" viewBox="0 0 5 6"><path d="M0.5 0V6L4.5 3Z" fill="#555"/></svg>
</body></html>
